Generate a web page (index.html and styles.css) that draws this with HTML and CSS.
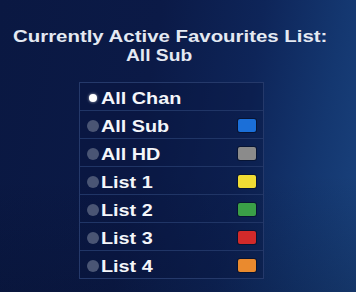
FILE: index.html
```html
<!DOCTYPE html>
<html>
<head>
<meta charset="utf-8">
<link rel="stylesheet" href="styles.css">
</head>
<body>
<div class="screen">
  <div class="title">
    <div class="title-line first"><span class="stretch">Currently Active Favourites List:</span></div>
    <div class="title-line second"><span class="stretch">All Sub</span></div>
  </div>
  <div class="list">
    <div class="row"><span class="dot active"></span><span class="stretch label">All Chan</span></div>
    <div class="row"><span class="dot"></span><span class="stretch label">All Sub</span><span class="swatch blue"></span></div>
    <div class="row"><span class="dot"></span><span class="stretch label">All HD</span><span class="swatch grey"></span></div>
    <div class="row"><span class="dot"></span><span class="stretch label">List 1</span><span class="swatch yellow"></span></div>
    <div class="row"><span class="dot"></span><span class="stretch label">List 2</span><span class="swatch green"></span></div>
    <div class="row"><span class="dot"></span><span class="stretch label">List 3</span><span class="swatch red"></span></div>
    <div class="row"><span class="dot"></span><span class="stretch label">List 4</span><span class="swatch orange"></span></div>
  </div>
</div>
</body>
</html>
```
FILE: styles.css
```css
html, body {
  margin: 0;
  padding: 0;
}
body {
  width: 356px;
  height: 292px;
  overflow: hidden;
  font-family: "Liberation Sans", Arial, sans-serif;
  font-weight: bold;
  color: #fff;
}
.screen {
  width: 356px;
  height: 292px;
  background:
    linear-gradient(180deg, rgba(5, 14, 40, 0) 0%, rgba(5, 14, 40, 0) 60%, rgba(5, 14, 40, 0.25) 100%),
    linear-gradient(100deg, #0a1842 0%, #0b1a47 40%, #0e2559 65%, #143770 85%, #1a437e 100%);
  display: flex;
  flex-direction: column;
}
.stretch {
  display: inline-block;
  transform: scaleX(1.2);
  transform-origin: left center;
  white-space: nowrap;
}
.title {
  padding-top: 27px;
  color: #e4e9f2;
}
.title-line {
  line-height: 19px;
}
.title-line.first {
  font-size: 17px;
  padding-left: 13px;
}
.title-line.second {
  font-size: 16px;
  padding-left: 126px;
}
.list {
  margin-top: 17px;
  margin-left: 79px;
  width: 183px;
  border: 1px solid #25396a;
  background: rgba(8, 20, 60, 0.35);
}
.row {
  display: flex;
  align-items: center;
  height: 27px;
  padding: 0 7px;
  border-bottom: 1px solid #203566;
}
.row:last-child {
  border-bottom: none;
}
.dot {
  width: 12px;
  height: 12px;
  margin-top: 3px;
  border-radius: 50%;
  background: #4a5574;
  flex: none;
  display: flex;
  align-items: center;
  justify-content: center;
}
.dot.active {
  background: transparent;
}
.dot.active::after {
  content: "";
  width: 8px;
  height: 8px;
  border-radius: 50%;
  background: #ffffff;
  box-shadow: 0 0 3px rgba(255, 255, 255, 0.7);
}
.label {
  font-size: 16.5px;
  line-height: 27px;
  padding-top: 3px;
  margin-left: 2px;
  color: #f4f6fa;
}
.swatch {
  margin-left: auto;
  width: 18px;
  height: 13px;
  margin-top: 1px;
  border-radius: 2px;
  box-shadow: 0 0 0 1px rgba(0, 0, 0, 0.35);
  flex: none;
}
.swatch.blue { background: #1b6fd8; }
.swatch.grey { background: #8b8b8b; }
.swatch.yellow { background: #f0dc34; }
.swatch.green { background: #3a9f47; }
.swatch.red { background: #d22a2a; }
.swatch.orange { background: #ea8a2e; }
```
